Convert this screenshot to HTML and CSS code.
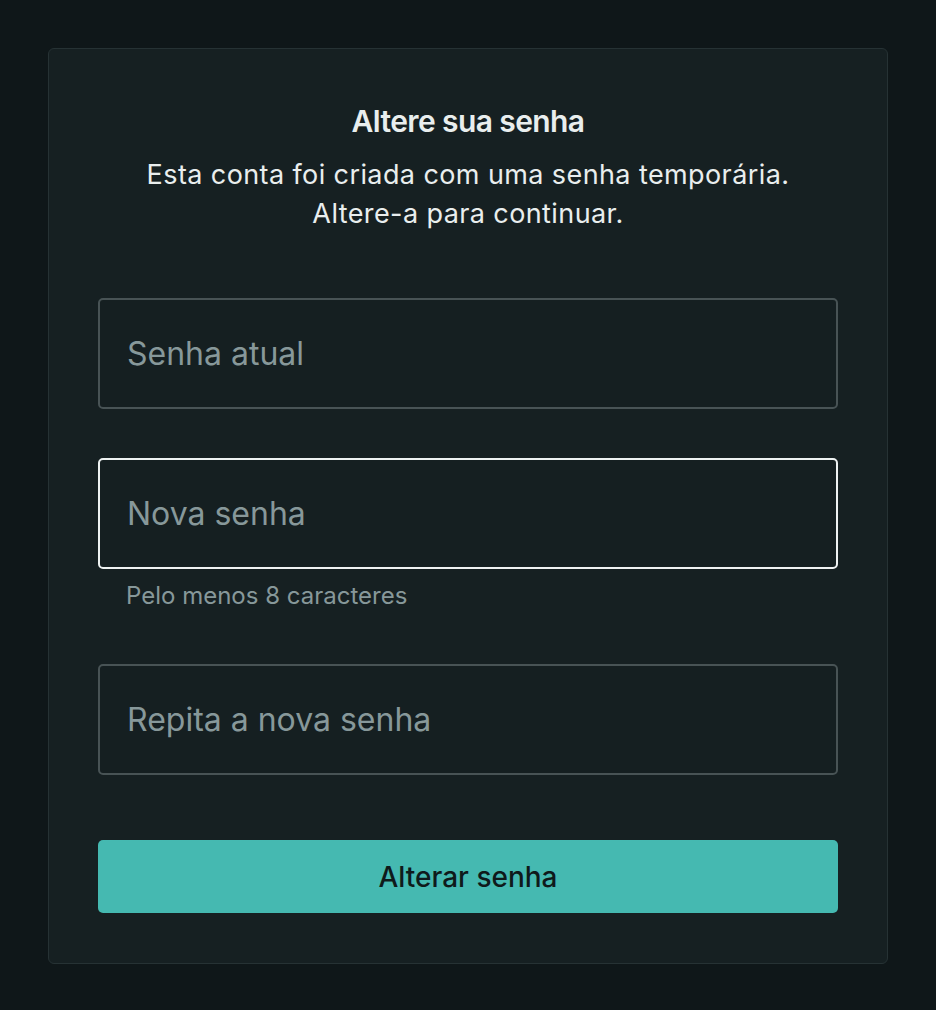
FILE: index.html
```html
<!DOCTYPE html>
<html lang="pt-BR">
<head>
  <meta charset="UTF-8">
  <meta name="viewport" content="width=device-width, initial-scale=1.0">
  <title>Altere sua senha</title>
  <link rel="stylesheet" href="styles.css">
</head>
<body>
  <div class="card">
    <h1 class="title">Altere sua senha</h1>
    <p class="subtitle">Esta conta foi criada com uma senha temporária.<br>Altere-a para continuar.</p>

    <form class="form">
      <div class="field">
        <input class="input" type="password" placeholder="Senha atual">
      </div>
      <div class="field field-hint">
        <input class="input input-focus" type="password" placeholder="Nova senha">
        <p class="hint">Pelo menos 8 caracteres</p>
      </div>
      <div class="field">
        <input class="input" type="password" placeholder="Repita a nova senha">
      </div>
      <button class="submit" type="button">Alterar senha</button>
    </form>
  </div>
</body>
</html>
```

FILE: styles.css
```css
html, body {
  margin: 0;
  padding: 0;
}

body {
  background-color: #0f1719;
  font-family: Inter, "Noto Sans", sans-serif;
  color: #e9eeee;
  padding: 48px;
}

.card {
  background-color: #162022;
  border: 1px solid #263234;
  border-radius: 6px;
  padding: 50px 49px 50px;
}

.title {
  margin: 0;
  text-align: center;
  font-size: 30px;
  font-weight: 600;
  letter-spacing: -0.6px;
  line-height: 44px;
}

.subtitle {
  margin: 12px 0 0;
  text-align: center;
  font-size: 27px;
  letter-spacing: 0.4px;
  line-height: 39px;
}

.form {
  margin-top: 65px;
  display: flex;
  flex-direction: column;
  gap: 49px;
}

.input {
  display: block;
  width: 100%;
  box-sizing: border-box;
  height: 111px;
  padding: 0 27px;
  background-color: #151f21;
  border: 2px solid #485355;
  border-radius: 5px;
  font-family: inherit;
  font-size: 32px;
  color: #e9eeee;
  outline: none;
}

.input::placeholder {
  color: #87989a;
}

.input-focus {
  border-color: #eef2f2;
}

.field-hint {
  margin-bottom: 3px;
}

.hint {
  margin: 11px 0 0 28px;
  font-size: 24px;
  line-height: 32px;
  color: #87989a;
}

.submit {
  margin-top: 16px;
  height: 73px;
  border: none;
  border-radius: 5px;
  background-color: #45b9b1;
  color: #0f1a1b;
  font-family: inherit;
  font-size: 28px;
  font-weight: 500;
  cursor: pointer;
}
```
